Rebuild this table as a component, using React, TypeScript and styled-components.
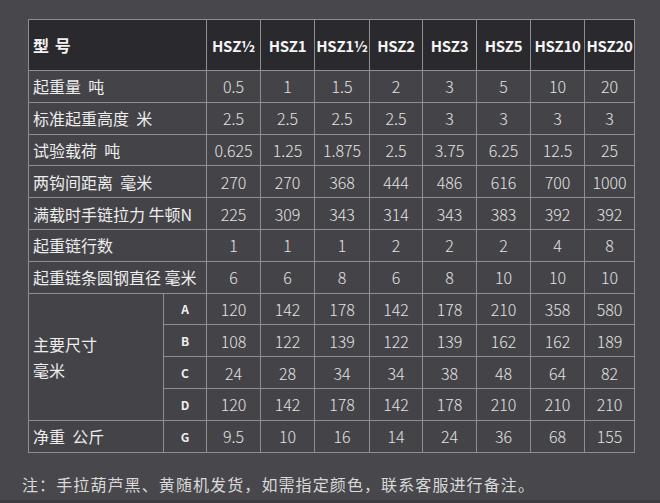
import React from "react";
import styled, { createGlobalStyle } from "styled-components";

const GlobalStyle = createGlobalStyle`
  html, body {
    margin: 0;
    padding: 0;
    background: #48474c;
  }
  body {
    font-family: "Noto Sans CJK SC", "Noto Sans", sans-serif;
  }
`;

const models = ["HSZ½", "HSZ1", "HSZ1½", "HSZ2", "HSZ3", "HSZ5", "HSZ10", "HSZ20"];
const widths = [54, 54, 55, 53, 54, 54, 54, 50];

const rows: { label: string; values: string[] }[] = [
  { label: "起重量  吨", values: ["0.5", "1", "1.5", "2", "3", "5", "10", "20"] },
  { label: "标准起重高度  米", values: ["2.5", "2.5", "2.5", "2.5", "3", "3", "3", "3"] },
  { label: "试验载荷  吨", values: ["0.625", "1.25", "1.875", "2.5", "3.75", "6.25", "12.5", "25"] },
  { label: "两钩间距离  毫米", values: ["270", "270", "368", "444", "486", "616", "700", "1000"] },
  { label: "满载时手链拉力 牛顿N", values: ["225", "309", "343", "314", "343", "383", "392", "392"] },
  { label: "起重链行数", values: ["1", "1", "1", "2", "2", "2", "4", "8"] },
  { label: "起重链条圆钢直径 毫米", values: ["6", "6", "8", "6", "8", "10", "10", "10"] },
];

const dims: { key: string; values: string[] }[] = [
  { key: "A", values: ["120", "142", "178", "142", "178", "210", "358", "580"] },
  { key: "B", values: ["108", "122", "139", "122", "139", "162", "162", "189"] },
  { key: "C", values: ["24", "28", "34", "34", "38", "48", "64", "82"] },
  { key: "D", values: ["120", "142", "178", "142", "178", "210", "210", "210"] },
];

const weight = ["9.5", "10", "16", "14", "24", "36", "68", "155"];

const Page = styled.div`
  box-sizing: border-box;
  height: 503px;
  padding: 19px 0 0 28px;
  border-bottom: 3px solid #3c3b40;
`;

const Table = styled.table`
  width: 606px;
  table-layout: fixed;
  border-collapse: collapse;
  border: 1px solid #a2a2a4;
`;

const HeadRow = styled.tr`
  height: 51px;
  background: #2a292e;
`;

const BodyRow = styled.tr`
  height: 31.8px;
  background: #444348;
`;

const HeadLabel = styled.th`
  border: 1px solid #8f8f92;
  padding: 0 0 0 4px;
  text-align: left;
  color: #f2f2f2;
  font-size: 16px;
  font-weight: 700;
  letter-spacing: 1px;
  white-space: pre;
`;

const HeadCell = styled.th`
  border: 1px solid #8f8f92;
  padding: 0;
  text-align: center;
  color: #f4f4f4;
  font-size: 15px;
  font-weight: 700;
  letter-spacing: -0.3px;
  white-space: nowrap;
`;

const Label = styled.td`
  border: 1px solid #8f8f92;
  padding: 0 0 0 4px;
  text-align: left;
  color: #ededed;
  font-size: 16px;
  white-space: pre;
  line-height: 26px;
`;

const Key = styled.td`
  border: 1px solid #8f8f92;
  padding: 0;
  text-align: center;
  color: #eeeeee;
  font-size: 12px;
  font-weight: 700;
`;

const Value = styled.td`
  border: 1px solid #8f8f92;
  padding: 0;
  text-align: center;
  color: #e2e2e2;
  font-size: 16px;
  font-weight: 300;
`;

const Note = styled.p`
  margin: 19px 0 0 -6px;
  color: #d9d9d9;
  font-size: 16px;
  letter-spacing: 1.1px;
`;

export default function App() {
  return (
    <>
      <GlobalStyle />
      <Page>
        <Table>
          <colgroup>
            <col style={{ width: 135 }} />
            <col style={{ width: 43 }} />
            {widths.map((w, i) => (
              <col key={i} style={{ width: w }} />
            ))}
          </colgroup>
          <tbody>
            <HeadRow>
              <HeadLabel colSpan={2}>{"型 号"}</HeadLabel>
              {models.map((m) => (
                <HeadCell key={m}>{m}</HeadCell>
              ))}
            </HeadRow>
            {rows.map((r) => (
              <BodyRow key={r.label}>
                <Label colSpan={2}>{r.label}</Label>
                {r.values.map((v, i) => (
                  <Value key={i}>{v}</Value>
                ))}
              </BodyRow>
            ))}
            {dims.map((d, idx) => (
              <BodyRow key={d.key}>
                {idx === 0 && <Label rowSpan={4}>{"主要尺寸\n毫米"}</Label>}
                <Key>{d.key}</Key>
                {d.values.map((v, i) => (
                  <Value key={i}>{v}</Value>
                ))}
              </BodyRow>
            ))}
            <BodyRow>
              <Label>{"净重  公斤"}</Label>
              <Key>G</Key>
              {weight.map((v, i) => (
                <Value key={i}>{v}</Value>
              ))}
            </BodyRow>
          </tbody>
        </Table>
        <Note>注：手拉葫芦黑、黄随机发货，如需指定颜色，联系客服进行备注。</Note>
      </Page>
    </>
  );
}
